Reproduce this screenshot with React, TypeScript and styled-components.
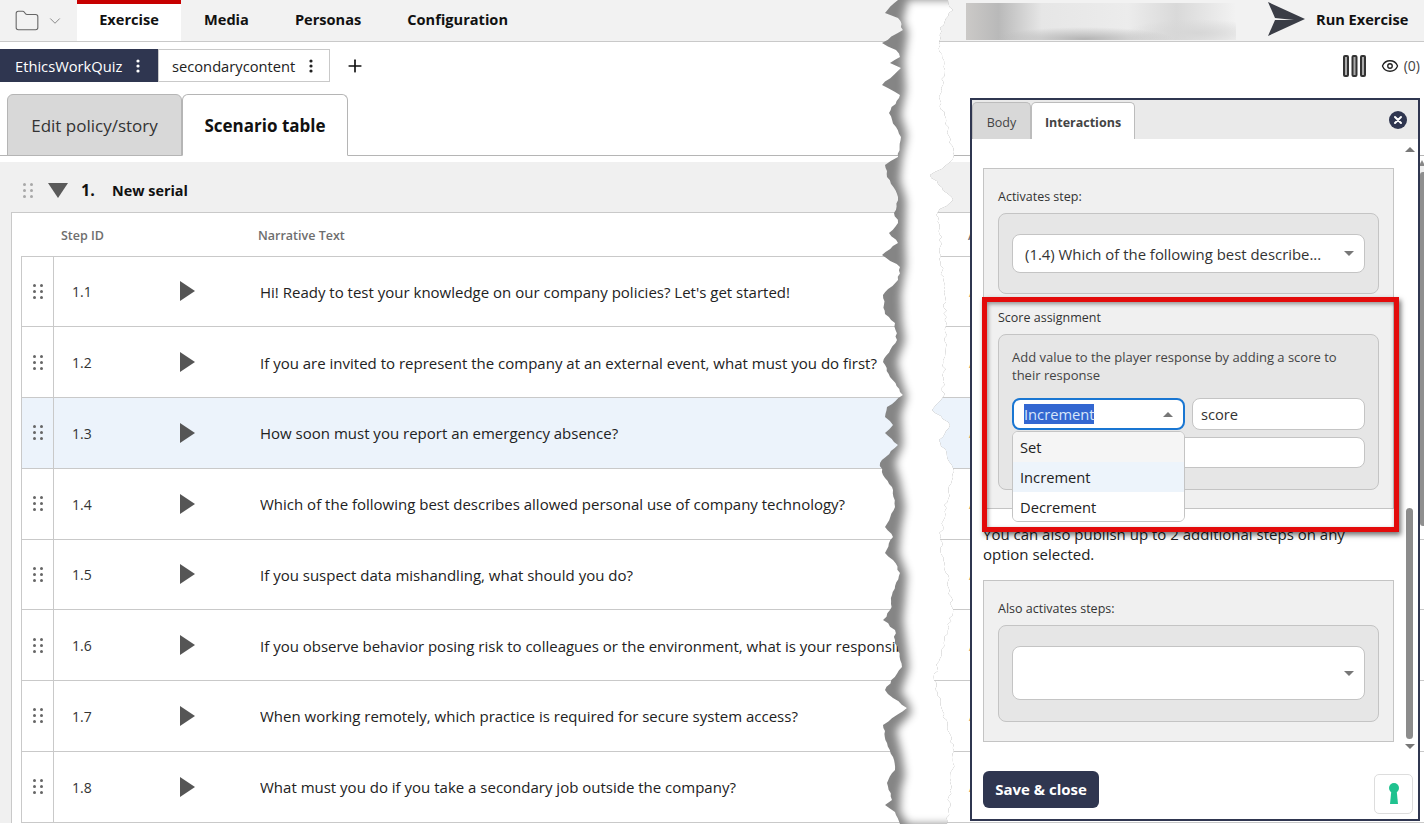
import React from "react";
import styled, { createGlobalStyle } from "styled-components";
import { ChevronDown, Eye, Folder, Plus } from "lucide-react";

const Global = createGlobalStyle`
  html, body { margin: 0; padding: 0; background: #fff; }
  body { font-family: "Open Sans", "Liberation Sans", sans-serif; color: #222; overflow: hidden; }
  * { box-sizing: border-box; }
`;

const Page = styled.div`
  position: relative;
  width: 1424px;
  height: 824px;
  overflow: hidden;
`;

const TopBar = styled.header`
  display: flex;
  align-items: stretch;
  height: 42px;
  background: #f2f2f2;
  border-bottom: 1px solid #c9c9c9;
`;
const FolderMenu = styled.div`
  display: flex;
  align-items: center;
  gap: 6px;
  width: 77px;
  padding-left: 14px;
  color: #666;
`;
const NavTab = styled.div<{ $active?: boolean }>`
  display: flex;
  align-items: center;
  justify-content: center;
  font-size: 14.6px;
  font-weight: 700;
  color: #111;
  padding: 0 23px 7px;
  width: ${(p) => (p.$active ? "104px" : "auto")};
  background: ${(p) => (p.$active ? "#fff" : "transparent")};
  border-top: 4px solid ${(p) => (p.$active ? "#c70000" : "transparent")};
`;
const NavSpacer = styled.div`
  flex: 1;
`;
const BlurBlock = styled.div`
  width: 270px;
  height: 37px;
  margin-top: 3px;
  background:
    radial-gradient(ellipse 90px 12px at 118px 36px, #b4b4b4 0%, rgba(180, 180, 180, 0) 100%),
    radial-gradient(ellipse 70px 14px at 230px 30px, #d6d6d6 0%, rgba(214, 214, 214, 0) 100%),
    linear-gradient(90deg, #cbc9c7 0%, #b9b9b9 12%, #e6e6e6 28%, #ececec 60%, #d9d9d9 78%, #f2f2f2 100%);
`;
const RunButton = styled.div`
  display: flex;
  align-items: center;
  gap: 10px;
  margin-left: 32px;
  width: 156px;
  font-size: 14.6px;
  font-weight: 700;
  color: #111;
  padding-bottom: 3px;
`;

const DocBar = styled.div`
  display: flex;
  align-items: center;
  height: 52px;
  padding-top: 7px;
  padding-bottom: 12px;
`;
const DocChip = styled.div<{ $active?: boolean }>`
  display: flex;
  align-items: center;
  justify-content: space-between;
  height: 33px;
  width: ${(p) => (p.$active ? "158px" : "172px")};
  padding: ${(p) => (p.$active ? "0 17px 0 14px" : "0 16px 0 13px")};
  font-size: 14.7px;
  color: ${(p) => (p.$active ? "#fff" : "#222")};
  background: ${(p) => (p.$active ? "#2f3650" : "#fff")};
  border: 1px solid ${(p) => (p.$active ? "#2f3650" : "#c9c9c9")};
`;
const Kebab = styled.svg`
  width: 4px;
  height: 14px;
  flex: none;
`;
const AddDoc = styled.div`
  display: flex;
  margin-left: 15px;
  color: #111;
`;
const DocTools = styled.div`
  display: flex;
  align-items: center;
  margin-left: auto;
  padding-right: 4px;
  gap: 15px;
`;
const ViewCount = styled.div`
  display: flex;
  align-items: center;
  gap: 5px;
  font-size: 14px;
  color: #444;
`;

const ViewTabs = styled.div`
  display: flex;
  align-items: flex-end;
  height: 62px;
  padding-left: 7px;
  border-bottom: 1px solid #b5b5b5;
`;
const ViewTab = styled.div<{ $active?: boolean }>`
  display: flex;
  align-items: center;
  justify-content: center;
  height: 62px;
  margin-bottom: -1px;
  width: ${(p) => (p.$active ? "166px" : "175px")};
  font-size: 17px;
  font-weight: ${(p) => (p.$active ? 700 : 400)};
  color: ${(p) => (p.$active ? "#111" : "#333")};
  background: ${(p) => (p.$active ? "#fff" : "#d8d8d8")};
  border: 1px solid #b5b5b5;
  border-bottom: ${(p) => (p.$active ? "1px solid #fff" : "1px solid #b5b5b5")};
  border-radius: 6px 6px 0 0;
`;

const SerialSection = styled.section`
  margin-top: 6px;
  background: #f0f0f0;
`;
const SerialHeader = styled.div`
  display: flex;
  align-items: center;
  height: 50px;
  padding: 6px 0 0 23px;
`;
const SerialNumber = styled.span`
  margin-left: 13px;
  width: 31px;
  font-size: 16px;
  font-weight: 700;
  color: #111;
`;
const SerialName = styled.span`
  font-size: 14.4px;
  font-weight: 700;
  color: #111;
`;

const TableFrame = styled.div`
  margin-left: 11px;
  padding-left: 9px;
  background: #fff;
  border-left: 1px solid #c9c9c9;
  border-top: 1px solid #c9c9c9;
`;
const TableHead = styled.div`
  display: flex;
  align-items: center;
  height: 42.6px;
  padding-top: 2px;
  font-size: 12.5px;
  font-weight: 600;
  color: #6e6e6e;
`;
const HeadStep = styled.div`
  margin-left: 40px;
  width: 197px;
`;
const HeadText = styled.div`
  width: 710px;
`;
const Row = styled.div<{ $active?: boolean }>`
  display: flex;
  align-items: stretch;
  height: 70.75px;
  background: ${(p) => (p.$active ? "#ecf3fb" : "#fff")};
  border-top: 1px solid #c9c9c9;
  border-left: 1px solid #c9c9c9;
  &:last-child {
    height: 71.75px;
    border-bottom: 1px solid #c9c9c9;
  }
`;
const GripCell = styled.div`
  display: flex;
  align-items: center;
  justify-content: center;
  width: 32px;
  flex: none;
  border-right: 1px solid #c9c9c9;
`;
const StepCell = styled.div`
  display: flex;
  align-items: center;
  width: 107px;
  padding-left: 18px;
  padding-top: 1px;
  font-size: 14px;
  color: #333;
`;
const PlayCell = styled.div`
  display: flex;
  align-items: center;
  width: 99px;
  padding-left: 19px;
`;
const NarrativeCell = styled.div`
  display: flex;
  align-items: center;
  width: 640px;
  padding-top: 1px;
  overflow: hidden;
  white-space: nowrap;
  font-size: 15px;
  color: #222;
`;
const AnswerCell = styled.div`
  display: flex;
  align-items: center;
  margin-left: 69px;
  font-size: 14px;
  color: #e0a060;
`;

const Panel = styled.aside`
  position: absolute;
  left: 970px;
  top: 98px;
  width: 450px;
  height: 723px;
  display: flex;
  flex-direction: column;
  background: #fff;
  border: 2px solid #2f3650;
`;
const PanelTabs = styled.div`
  display: flex;
  align-items: flex-end;
  flex: none;
  height: 39px;
  background: #eaeaea;
`;
const PanelTab = styled.div<{ $active?: boolean }>`
  display: flex;
  align-items: center;
  justify-content: center;
  height: 37px;
  padding-top: 2px;
  width: ${(p) => (p.$active ? "104px" : "59px")};
  font-size: 12.5px;
  font-weight: ${(p) => (p.$active ? 700 : 400)};
  color: #444;
  background: ${(p) => (p.$active ? "#fff" : "#d8d8d8")};
  border: 1px solid #bcbcbc;
  border-bottom: none;
  border-radius: 5px 5px 0 0;
`;
const CloseDot = styled.svg`
  position: absolute;
  left: 417px;
  top: 11px;
  width: 18px;
  height: 18px;
`;
const PanelBody = styled.div`
  position: relative;
  flex: 1;
  padding: 29px 0 0 11px;
`;
const OptionBox = styled.div`
  width: 411px;
  padding: 0 14px;
  background: #f0f0f0;
  border: 1px solid #c4c4c4;
`;
const BoxLabel = styled.div<{ $top: number; $height: number }>`
  padding-top: ${(p) => p.$top}px;
  height: ${(p) => p.$height}px;
  font-size: 12.5px;
  line-height: 17px;
  color: #333;
`;
const BoxInner = styled.div<{ $pad: string }>`
  width: 381px;
  padding: ${(p) => p.$pad};
  background: #e6e6e6;
  border: 1px solid #c4c4c4;
  border-radius: 8px;
`;
const SelectBox = styled.div<{ $height: number }>`
  display: flex;
  align-items: center;
  justify-content: space-between;
  height: ${(p) => p.$height}px;
  padding: 0 10px 0 12px;
  background: #fff;
  border: 1px solid #c4c4c4;
  border-radius: 8px;
  font-size: 14.9px;
  color: #333;
`;
const Caret = styled.span<{ $up?: boolean }>`
  width: 0;
  height: 0;
  border-left: 5px solid transparent;
  border-right: 5px solid transparent;
  border-${(p) => (p.$up ? "bottom" : "top")}: 5px solid #777;
`;
const HelpText = styled.div`
  font-size: 13px;
  line-height: 18px;
  color: #444;
  padding-right: 10px;
  margin-bottom: 14px;
`;
const FieldRow = styled.div`
  display: flex;
  gap: 7px;
  margin-bottom: 7px;
`;
const ScoreSelect = styled.div`
  display: flex;
  align-items: center;
  justify-content: space-between;
  width: 173px;
  height: 32px;
  padding: 0 10px;
  background: #fff;
  border: 2px solid #1976d2;
  border-radius: 8px;
  font-size: 14.7px;
`;
const Selected = styled.span`
  background: #3367d1;
  color: #d7e6fa;
  line-height: 20px;
`;
const TextField = styled.div<{ $height: number }>`
  flex: 1;
  display: flex;
  align-items: center;
  height: ${(p) => p.$height}px;
  padding-left: 8px;
  background: #fff;
  border: 1px solid #c4c4c4;
  border-radius: 8px;
  font-size: 14.7px;
  color: #333;
`;
const Menu = styled.div`
  position: absolute;
  left: 40px;
  top: 292px;
  width: 173px;
  height: 91px;
  z-index: 3;
  background: #fff;
  border: 1px solid #c4c4c4;
  border-radius: 6px;
  overflow: hidden;
  font-size: 14.7px;
  color: #222;
`;
const MenuItem = styled.div<{ $bg: string }>`
  display: flex;
  align-items: center;
  height: 30px;
  padding-left: 7px;
  background: ${(p) => p.$bg};
`;
const Highlight = styled.div`
  position: absolute;
  left: 10px;
  top: 158px;
  width: 417px;
  height: 235px;
  z-index: 2;
  border: 5px solid #e30b0b;
  box-shadow: 2px 3px 5px rgba(0, 0, 0, 0.55), inset 1px 2px 4px rgba(0, 0, 0, 0.4);
  pointer-events: none;
`;
const PublishNote = styled.p`
  margin: 15px 0 16px;
  width: 390px;
  font-size: 15px;
  line-height: 20px;
  color: #222;
`;
const Track = styled.div`
  position: absolute;
  right: 1px;
  top: 8px;
  bottom: 70px;
  width: 14px;
  display: flex;
  flex-direction: column;
  align-items: center;
  justify-content: space-between;
`;
const Thumb = styled.div`
  position: absolute;
  left: 3px;
  bottom: 10px;
  width: 7px;
  height: 231px;
  border-radius: 4px;
  background: #8c8c8c;
`;
const SaveButton = styled.div`
  position: absolute;
  left: 11px;
  bottom: 11px;
  display: flex;
  align-items: center;
  justify-content: center;
  width: 116px;
  height: 37px;
  padding-bottom: 1px;
  border-radius: 6px;
  background: #2f3650;
  color: #fff;
  font-size: 15px;
  font-weight: 700;
`;
const KeyButton = styled.div`
  position: absolute;
  right: 5px;
  bottom: 5px;
  display: flex;
  align-items: center;
  justify-content: center;
  width: 39px;
  height: 40px;
  background: #fff;
  border: 1px solid #ddd;
  border-radius: 5px;
`;
const PageScroll = styled.div`
  position: absolute;
  right: 0;
  top: 160px;
  width: 4px;
  height: 366px;
  display: flex;
  flex-direction: column;
  gap: 6px;
`;
const PageArrow = styled.span`
  width: 0;
  height: 0;
  border-left: 3px solid transparent;
  border-right: 3px solid transparent;
  border-bottom: 6px solid #888;
  margin-left: -1px;
`;
const PageThumb = styled.span`
  flex: 1;
  background: #8f8f8f;
  border-radius: 3px 0 0 3px;
`;
const TearLayer = styled.svg`
  position: absolute;
  left: 870px;
  top: 0;
  width: 100px;
  height: 824px;
  z-index: 1;
  pointer-events: none;
`;

const rows: [string, string][] = [
  ["1.1", "Hi! Ready to test your knowledge on our company policies? Let's get started!"],
  ["1.2", "If you are invited to represent the company at an external event, what must you do first?"],
  ["1.3", "How soon must you report an emergency absence?"],
  ["1.4", "Which of the following best describes allowed personal use of company technology?"],
  ["1.5", "If you suspect data mishandling, what should you do?"],
  ["1.6", "If you observe behavior posing risk to colleagues or the environment, what is your responsibility?"],
  ["1.7", "When working remotely, which practice is required for secure system access?"],
  ["1.8", "What must you do if you take a secondary job outside the company?"],
];

const Grip = ({ color }: { color: string }) => (
  <svg width="10" height="15" viewBox="0 0 10 15">
    {[1.5, 7.5, 13.5].map((y) =>
      [1.5, 8.5].map((x) => <circle key={`${x}-${y}`} cx={x} cy={y} r="1.5" fill={color} />)
    )}
  </svg>
);

const Dots = ({ color }: { color: string }) => (
  <Kebab viewBox="0 0 4 14">
    <circle cx="2" cy="2" r="1.6" fill={color} />
    <circle cx="2" cy="7" r="1.6" fill={color} />
    <circle cx="2" cy="12" r="1.6" fill={color} />
  </Kebab>
);

const leftEdge: [number, number][] = [
  [898, 0], [885, 13], [898, 18], [903, 30], [882, 43], [896, 50], [900, 57], [890, 63], [901, 68], [882, 85],
  [900, 95], [889, 113], [896, 127], [901, 137], [898, 157], [885, 165], [887, 177], [898, 197], [894, 213],
  [898, 223], [889, 233], [898, 243], [882, 255], [900, 267], [898, 280], [883, 295], [885, 314], [895, 323],
  [897, 340], [883, 362], [890, 377], [903, 395], [887, 407], [885, 417], [893, 425], [885, 433], [898, 445],
  [880, 463], [883, 475], [893, 490], [895, 507], [885, 527], [893, 537], [885, 553], [893, 560], [900, 573],
  [892, 595], [890, 610], [883, 620], [895, 630], [895, 640], [898, 650], [902, 667], [885, 690], [893, 698],
  [907, 708], [883, 725], [887, 743], [893, 757], [895, 770], [887, 783], [892, 800], [885, 805], [895, 812],
  [900, 824],
];
const rightEdge: [number, number][] = [
  [948, 0], [953, 10], [940, 28], [939, 42], [945, 70], [940, 100], [948, 130], [954, 155], [945, 166], [930, 175],
  [953, 200], [938, 212], [941, 256], [946, 326], [943, 397], [932, 410], [950, 425], [939, 440], [953, 468],
  [940, 539], [953, 609], [934, 680], [954, 751], [947, 824],
];
const fadeEdge: [number, number][] = [
  [908, 0], [903, 20], [908, 32], [904, 60], [906, 90], [901, 115], [907, 135], [902, 160], [900, 180], [906, 200],
  [905, 240], [906, 265], [901, 295], [902, 320], [905, 340], [897, 362], [903, 385], [907, 396], [901, 415],
  [903, 445], [895, 463], [900, 480], [905, 507], [901, 530], [899, 553], [907, 575], [905, 600], [903, 620],
  [907, 650], [909, 668], [901, 692], [907, 700], [912, 712], [896, 730], [902, 755], [905, 775], [901, 790],
  [900, 812], [908, 824],
];

// Roughen a polyline so the torn edge has fine paper-fibre jitter.
const roughen = (pts: [number, number][], amount: number): [number, number][] => {
  const out: [number, number][] = [];
  pts.forEach(([x, y], i) => {
    out.push([x, y]);
    const next = pts[i + 1];
    if (!next) return;
    const steps = Math.max(1, Math.floor((next[1] - y) / 3));
    for (let s = 1; s < steps; s++) {
      const t = s / steps;
      const noise = Math.sin(y * 12.9898 + s * 78.233) * 43758.5453;
      const jitter = (noise - Math.floor(noise) - 0.5) * amount;
      out.push([x + (next[0] - x) * t + jitter, y + (next[1] - y) * t]);
    }
  });
  return out;
};
const toPoints = (pts: [number, number][]) =>
  pts.map(([x, y]) => `${(x - 870).toFixed(1)},${y.toFixed(1)}`).join(" ");
const tearShape = `${toPoints(roughen(leftEdge, 2.5))} ${toPoints(roughen(rightEdge, 4).reverse())}`;
const fadeShape = `${toPoints(fadeEdge)} 100,824 100,0`;

export default function App() {
  return (
    <Page>
      <Global />
      <TopBar>
        <FolderMenu>
          <Folder size={26} strokeWidth={1} />
          <ChevronDown size={18} strokeWidth={1} />
        </FolderMenu>
        <NavTab $active>Exercise</NavTab>
        <NavTab>Media</NavTab>
        <NavTab>Personas</NavTab>
        <NavTab>Configuration</NavTab>
        <NavSpacer />
        <BlurBlock />
        <RunButton>
          <svg width="38" height="36" viewBox="0 0 38 36">
            <path d="M0 1 L37 18 L0 35 L7 19 L26 19 L7 17 Z" fill="#3a3d46" />
          </svg>
          Run Exercise
        </RunButton>
      </TopBar>
      <DocBar>
        <DocChip $active>
          EthicsWorkQuiz
          <Dots color="#fff" />
        </DocChip>
        <DocChip>
          secondarycontent
          <Dots color="#222" />
        </DocChip>
        <AddDoc>
          <Plus size={20} strokeWidth={2} />
        </AddDoc>
        <DocTools>
          <svg width="23" height="22" viewBox="0 0 23 22">
            {[0, 8.5, 17].map((x) => (
              <rect key={x} x={x + 1} y="1" width="4" height="20" rx="1" fill="#aaa" stroke="#333" strokeWidth="2" />
            ))}
          </svg>
          <ViewCount>
            <Eye size={18} strokeWidth={1.8} color="#222" />
            (0)
          </ViewCount>
        </DocTools>
      </DocBar>
      <ViewTabs>
        <ViewTab>Edit policy/story</ViewTab>
        <ViewTab $active>Scenario table</ViewTab>
      </ViewTabs>
      <SerialSection>
        <SerialHeader>
          <Grip color="#a8a8a8" />
          <svg width="20" height="15" viewBox="0 0 20 15" style={{ marginLeft: 15 }}>
            <path d="M0 0 H20 L10 15 Z" fill="#5a5a5a" />
          </svg>
          <SerialNumber>1.</SerialNumber>
          <SerialName>New serial</SerialName>
        </SerialHeader>
        <TableFrame>
          <TableHead>
            <HeadStep>Step ID</HeadStep>
            <HeadText>Narrative Text</HeadText>
            <span>Answers</span>
          </TableHead>
          {rows.map(([id, text]) => (
            <Row key={id} $active={id === "1.3"}>
              <GripCell>
                <Grip color="#666" />
              </GripCell>
              <StepCell>{id}</StepCell>
              <PlayCell>
                <svg width="15" height="20" viewBox="0 0 15 20">
                  <path d="M0 0 L15 10 L0 20 Z" fill="#555" />
                </svg>
              </PlayCell>
              <NarrativeCell>{text}</NarrativeCell>
              <AnswerCell>Answer</AnswerCell>
            </Row>
          ))}
        </TableFrame>
      </SerialSection>

      <TearLayer viewBox="0 0 100 824">
        <defs>
          <clipPath id="tear">
            <polygon points={tearShape} />
          </clipPath>
          <filter id="soft" x="-30%" y="-5%" width="160%" height="110%">
            <feGaussianBlur stdDeviation="4" />
          </filter>
        </defs>
        <g clipPath="url(#tear)">
          <rect width="100" height="824" fill="#858585" />
          <polygon points={fadeShape} fill="#fff" filter="url(#soft)" />
        </g>
      </TearLayer>

      <PageScroll>
        <PageArrow />
        <PageThumb />
      </PageScroll>
      <Panel>
        <PanelTabs>
          <PanelTab>Body</PanelTab>
          <PanelTab $active>Interactions</PanelTab>
        </PanelTabs>
        <CloseDot viewBox="0 0 18 18">
          <circle cx="9" cy="9" r="9" fill="#2f3650" />
          <path d="M6 6 L12 12 M12 6 L6 12" stroke="#fff" strokeWidth="2" strokeLinecap="round" />
        </CloseDot>
        <PanelBody>
          <OptionBox>
            <BoxLabel $top={19} $height={44}>Activates step:</BoxLabel>
            <BoxInner $pad="20px 13px">
              <SelectBox $height={39}>
                (1.4) Which of the following best describe...
                <Caret />
              </SelectBox>
            </BoxInner>
            <BoxLabel $top={15} $height={40}>Score assignment</BoxLabel>
            <BoxInner $pad="13px 13px 21px">
              <HelpText>Add value to the player response by adding a score to their response</HelpText>
              <FieldRow>
                <ScoreSelect>
                  <Selected>Increment</Selected>
                  <Caret $up />
                </ScoreSelect>
                <TextField $height={32}>score</TextField>
              </FieldRow>
              <TextField $height={31} />
            </BoxInner>
            <div style={{ height: 18 }} />
          </OptionBox>
          <PublishNote>You can also publish up to 2 additional steps on any option selected.</PublishNote>
          <OptionBox>
            <BoxLabel $top={19} $height={44}>Also activates steps:</BoxLabel>
            <BoxInner $pad="20px 13px 21px">
              <SelectBox $height={54}>
                <span />
                <Caret />
              </SelectBox>
            </BoxInner>
            <div style={{ height: 19 }} />
          </OptionBox>
          <Menu>
            <MenuItem $bg="#f5f5f5">Set</MenuItem>
            <MenuItem $bg="#edf4fb">Increment</MenuItem>
            <MenuItem $bg="#fff">Decrement</MenuItem>
          </Menu>
          <Highlight />
          <Track>
            <Caret $up />
            <Thumb />
            <Caret />
          </Track>
          <SaveButton>Save &amp; close</SaveButton>
          <KeyButton>
            <svg width="12" height="22" viewBox="0 0 12 22">
              <circle cx="6" cy="5" r="5" fill="#1fc28f" />
              <path d="M3.5 6 H8.5 L10 21 H2 Z" fill="#1fc28f" />
            </svg>
          </KeyButton>
        </PanelBody>
      </Panel>
    </Page>
  );
}
